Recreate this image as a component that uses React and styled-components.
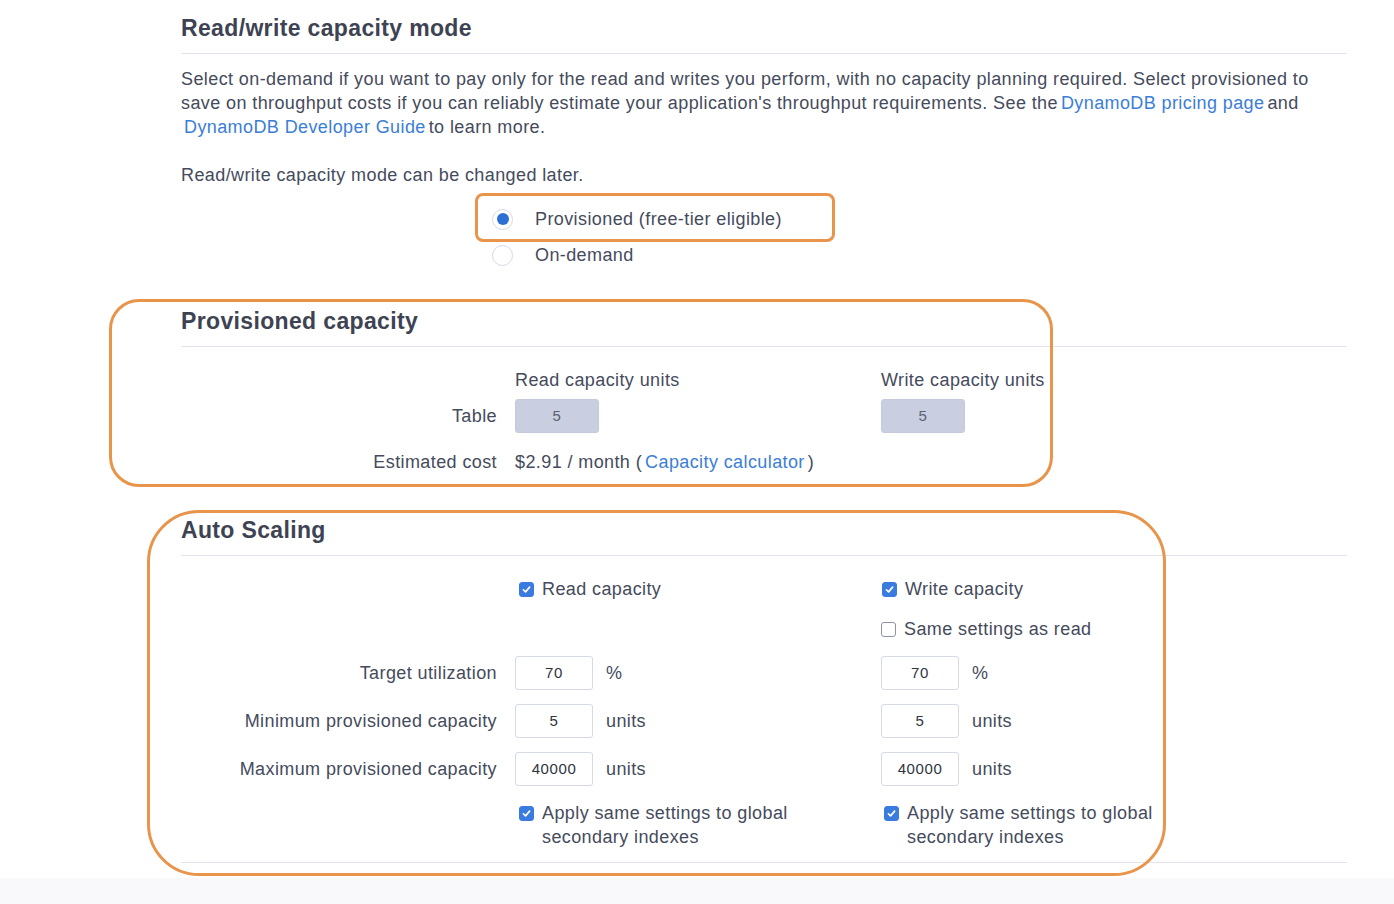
import React from "react";
import styled, { createGlobalStyle } from "styled-components";

const Global = createGlobalStyle`
  html, body { margin: 0; padding: 0; background: #ffffff; }
  body { font-family: "Liberation Sans", Arial, sans-serif; color: #454b5c; }
  * { box-sizing: border-box; }
`;

const Page = styled.div`
  position: relative;
  width: 1394px;
  height: 904px;
  overflow: hidden;
  background: #ffffff;
`;

const Content = styled.div`
  width: 1166px;
  margin-left: 181px;
  padding-top: 15px;
  display: flex;
  flex-direction: column;
`;

const Heading = styled.h2`
  margin: ${(p) => p.$mt || 0}px 0 0 0;
  font-size: 23px;
  line-height: 26px;
  font-weight: 700;
  color: #3e4353;
  letter-spacing: 0.35px;
  padding-bottom: 12px;
  border-bottom: 1px solid #e3e3ef;
`;

const Para = styled.p`
  margin: ${(p) => p.$mt || 0}px 0 0 0;
  font-size: 18px;
  line-height: 24px;
  letter-spacing: 0.4px;
  color: #454b5c;
  white-space: nowrap;
`;

const Link = styled.a`
  color: #3b7ed6;
  text-decoration: none;
  padding: 0 ${(p) => p.$pad ?? 3}px;
`;

const RadioGroup = styled.div`
  margin: 20px 0 0 311px;
  display: flex;
  flex-direction: column;
  gap: 12px;
`;

const RadioRow = styled.label`
  display: flex;
  align-items: center;
  height: 24px;
  font-size: 18px;
  letter-spacing: 0.4px;
  color: #454b5c;
  gap: 22px;
`;

const RadioCircle = styled.span`
  width: 21px;
  height: 21px;
  border-radius: 50%;
  border: 1px solid #d6d9e6;
  background: #fff;
  display: flex;
  align-items: center;
  justify-content: center;
  &::after {
    content: "";
    width: 12px;
    height: 12px;
    border-radius: 50%;
    background: ${(p) => (p.$checked ? "#2e6fd6" : "transparent")};
  }
`;

const FormRow = styled.div`
  display: grid;
  grid-template-columns: 334px 366px 1fr;
  align-items: ${(p) => p.$align || "center"};
  min-height: ${(p) => p.$h || 24}px;
  margin-top: ${(p) => p.$mt || 0}px;
  font-size: 18px;
  line-height: 24px;
  letter-spacing: 0.4px;
  white-space: nowrap;
`;

const Label = styled.div`
  text-align: right;
  padding-right: 18px;
  color: #454b5c;
`;

const Cell = styled.div`
  display: flex;
  align-items: ${(p) => p.$align || "center"};
  gap: ${(p) => p.$gap ?? 13}px;
  color: #454b5c;
`;

const Field = styled.div`
  width: ${(p) => p.$w || 78}px;
  height: 34px;
  border-radius: 3px;
  display: flex;
  align-items: center;
  justify-content: center;
  font-size: 15px;
  letter-spacing: 0.6px;
  color: ${(p) => (p.$disabled ? "#5d6270" : "#2f3442")};
  background: ${(p) => (p.$disabled ? "#c9cee0" : "#ffffff")};
  border: 1px solid ${(p) => (p.$disabled ? "#c5cadb" : "#d6dae7")};
`;

const CheckRow = styled.label`
  display: flex;
  align-items: ${(p) => (p.$top ? "flex-start" : "center")};
  gap: 8px;
  margin-left: ${(p) => p.$ml ?? 4}px;
  color: #454b5c;
`;

const Box = styled.span`
  flex: none;
  width: 15px;
  height: 15px;
  margin-top: ${(p) => (p.$top ? 5 : 0)}px;
  border-radius: 3px;
  display: flex;
  align-items: center;
  justify-content: center;
  background: ${(p) => (p.$checked ? "#3a7be0" : "#ffffff")};
  border: 1px solid ${(p) => (p.$checked ? "#3a7be0" : "#8d93a3")};
`;

const Divider = styled.div`
  margin-top: ${(p) => p.$mt || 0}px;
  border-top: 1px solid #e3e3ef;
`;

const Footer = styled.div`
  position: absolute;
  left: 0;
  right: 0;
  bottom: 0;
  height: 26px;
  background: #f9f9fb;
`;

const Callout = styled.div`
  position: absolute;
  left: ${(p) => p.$x}px;
  top: ${(p) => p.$y}px;
  width: ${(p) => p.$w}px;
  height: ${(p) => p.$h}px;
  border: 3px solid #e8944b;
  border-radius: ${(p) => p.$r}px;
  pointer-events: none;
`;

const Check = ({ checked, top }) => (
  <Box $checked={checked} $top={top}>
    {checked && (
      <svg width="11" height="11" viewBox="0 0 12 12">
        <path d="M2.6 6.3 L5 8.6 L9.4 3.4" fill="none" stroke="#fff" strokeWidth="1.8" strokeLinecap="round" strokeLinejoin="round" />
      </svg>
    )}
  </Box>
);

export default function App() {
  return (
    <>
      <Global />
      <Page>
        <Content>
          <Heading>Read/write capacity mode</Heading>
          <Para $mt={13}>
            Select on-demand if you want to pay only for the read and writes you perform, with no capacity planning required. Select provisioned to
            <br />
            save on throughput costs if you can reliably estimate your application's throughput requirements. See the
            <Link>DynamoDB pricing page</Link>and
            <br />
            <Link>DynamoDB Developer Guide</Link>to learn more.
          </Para>
          <Para $mt={24}>Read/write capacity mode can be changed later.</Para>
          <RadioGroup>
            <RadioRow>
              <RadioCircle $checked />
              Provisioned (free-tier eligible)
            </RadioRow>
            <RadioRow>
              <RadioCircle />
              On-demand
            </RadioRow>
          </RadioGroup>

          <Heading $mt={41}>Provisioned capacity</Heading>
          <FormRow $mt={21}>
            <Label />
            <Cell>Read capacity units</Cell>
            <Cell>Write capacity units</Cell>
          </FormRow>
          <FormRow $mt={7} $h={34}>
            <Label>Table</Label>
            <Cell>
              <Field $w={84} $disabled>5</Field>
            </Cell>
            <Cell>
              <Field $w={84} $disabled>5</Field>
            </Cell>
          </FormRow>
          <FormRow $mt={17}>
            <Label>Estimated cost</Label>
            <Cell $gap={0} style={{ gridColumn: "2 / 4" }}>
              $2.91 / month&nbsp;(<Link $pad={3}>Capacity calculator</Link>)
            </Cell>
          </FormRow>

          <Heading $mt={43}>Auto Scaling</Heading>
          <FormRow $mt={21}>
            <Label />
            <Cell>
              <CheckRow>
                <Check checked />
                Read capacity
              </CheckRow>
            </Cell>
            <Cell>
              <CheckRow $ml={1}>
                <Check checked />
                Write capacity
              </CheckRow>
            </Cell>
          </FormRow>
          <FormRow $mt={16}>
            <Label />
            <Cell />
            <Cell>
              <CheckRow $ml={0}>
                <Check />
                Same settings as read
              </CheckRow>
            </Cell>
          </FormRow>
          <FormRow $mt={15} $h={34}>
            <Label>Target utilization</Label>
            <Cell>
              <Field>70</Field>%
            </Cell>
            <Cell>
              <Field>70</Field>%
            </Cell>
          </FormRow>
          <FormRow $mt={14} $h={34}>
            <Label>Minimum provisioned capacity</Label>
            <Cell>
              <Field>5</Field>units
            </Cell>
            <Cell>
              <Field>5</Field>units
            </Cell>
          </FormRow>
          <FormRow $mt={14} $h={34}>
            <Label>Maximum provisioned capacity</Label>
            <Cell>
              <Field>40000</Field>units
            </Cell>
            <Cell>
              <Field>40000</Field>units
            </Cell>
          </FormRow>
          <FormRow $mt={15} $align="start">
            <Label />
            <Cell $align="flex-start">
              <CheckRow $top>
                <Check checked top />
                <span>
                  Apply same settings to global
                  <br />
                  secondary indexes
                </span>
              </CheckRow>
            </Cell>
            <Cell $align="flex-start">
              <CheckRow $top $ml={3}>
                <Check checked top />
                <span>
                  Apply same settings to global
                  <br />
                  secondary indexes
                </span>
              </CheckRow>
            </Cell>
          </FormRow>
          <Divider $mt={13} />
        </Content>
        <Footer />
        <Callout $x={475} $y={193} $w={360} $h={49} $r={8} />
        <Callout $x={109} $y={299} $w={944} $h={188} $r={30} />
        <Callout $x={147} $y={510} $w={1019} $h={366} $r={52} />
      </Page>
    </>
  );
}
